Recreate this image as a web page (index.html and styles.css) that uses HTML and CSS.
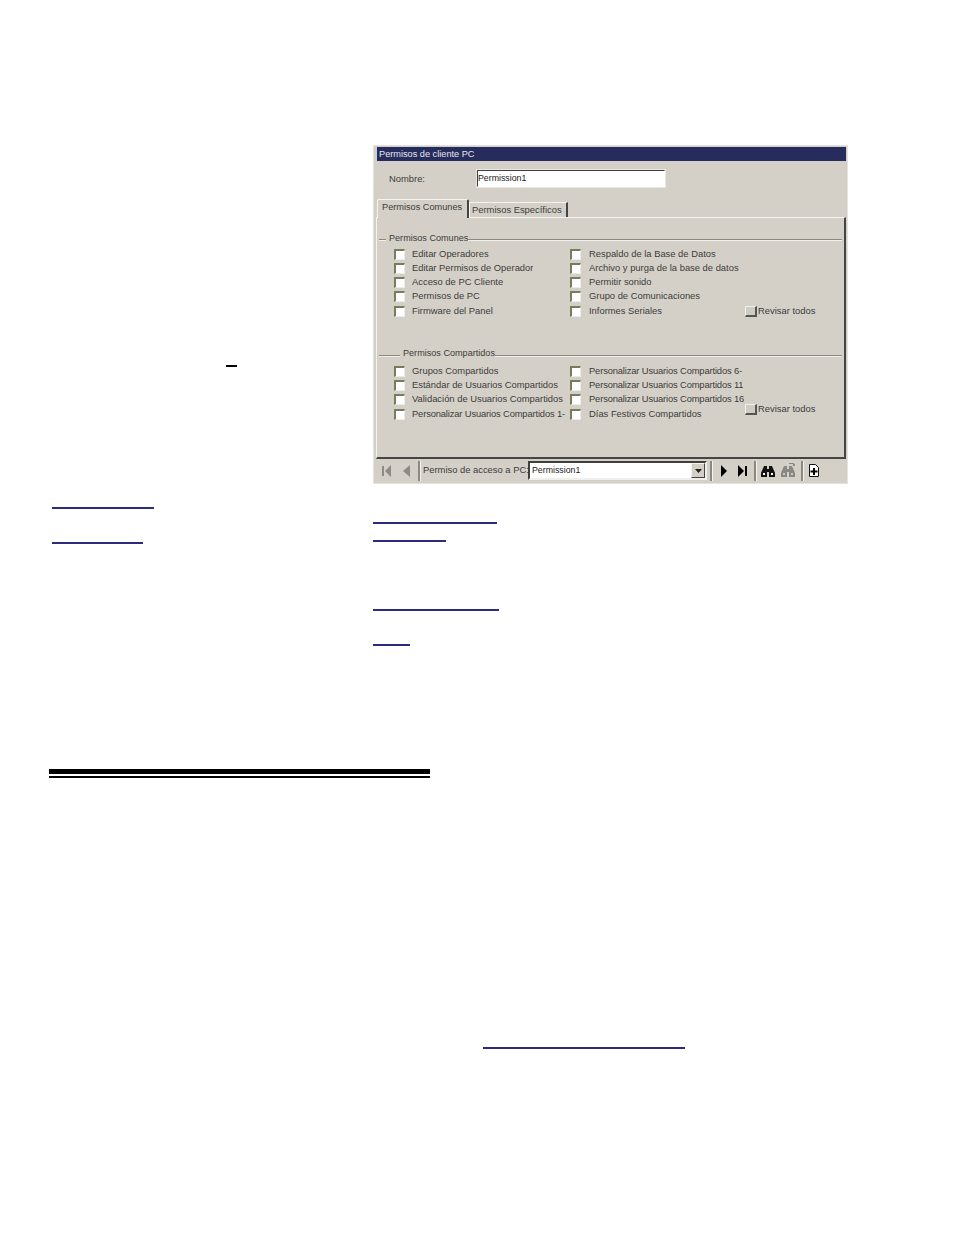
FILE: index.html
```html
<!DOCTYPE html>
<html lang="es">
<head>
<meta charset="utf-8">
<title>Permisos de cliente PC</title>
<link rel="stylesheet" href="styles.css">
</head>
<body>
<main class="page">
  <section class="left">
    <div class="dash"></div>
    <div class="link link-a"></div>
    <div class="link link-b"></div>
    <div class="heavy-rule"></div>
    <div class="thin-rule"></div>
  </section>
  <section class="right">
    <div class="dialog">
      <div class="title">Permisos de cliente PC</div>
      <div class="name-row">
        <span class="name-label">Nombre:</span>
        <div class="name-input">Permission1</div>
      </div>
      <div class="tabs">
        <div class="tab tab-active">Permisos Comunes</div>
        <div class="tab tab-other">Permisos Específicos</div>
      </div>
      <div class="panel">
        <div class="group-head head-one"><span class="line line-short"></span><span class="head-text">Permisos Comunes</span><span class="line"></span></div>
        <div class="checks">
          <div class="item"><i class="box"></i><span>Editar Operadores</span></div>
          <div class="item"><i class="box"></i><span>Respaldo de la Base de Datos</span></div>
          <div class="item"><i class="box"></i><span>Editar Permisos de Operador</span></div>
          <div class="item"><i class="box"></i><span>Archivo y purga de la base de datos</span></div>
          <div class="item"><i class="box"></i><span>Acceso de PC Cliente</span></div>
          <div class="item"><i class="box"></i><span>Permitir sonido</span></div>
          <div class="item"><i class="box"></i><span>Permisos de PC</span></div>
          <div class="item"><i class="box"></i><span>Grupo de Comunicaciones</span></div>
          <div class="item"><i class="box"></i><span>Firmware del Panel</span></div>
          <div class="item"><i class="box"></i><span>Informes Seriales</span></div>
          <div class="review review-one"><i class="raised"></i><span>Revisar todos</span></div>
        </div>
        <div class="group-head head-two"><span class="line line-long"></span><span class="head-text">Permisos Compartidos</span><span class="line"></span></div>
        <div class="checks">
          <div class="item"><i class="box"></i><span>Grupos Compartidos</span></div>
          <div class="item"><i class="box"></i><span class="tight">Personalizar Usuarios Compartidos 6-</span></div>
          <div class="item"><i class="box"></i><span>Estándar de Usuarios Compartidos</span></div>
          <div class="item"><i class="box"></i><span class="tight">Personalizar Usuarios Compartidos 11</span></div>
          <div class="item"><i class="box"></i><span>Validación de Usuarios Compartidos</span></div>
          <div class="item"><i class="box"></i><span class="tight">Personalizar Usuarios Compartidos 16</span></div>
          <div class="item"><i class="box"></i><span class="tight">Personalizar Usuarios Compartidos 1-</span></div>
          <div class="item"><i class="box"></i><span>Días Festivos Compartidos</span></div>
          <div class="review review-two"><i class="raised"></i><span>Revisar todos</span></div>
        </div>
      </div>
      <div class="toolbar">
        <svg class="ic ic-first" viewBox="0 0 9 12"><path fill="#8d8b85" d="M0 1h2v10H0zM9 0v12L3 6z"/></svg>
        <svg class="ic ic-prev" viewBox="0 0 8 12"><path fill="#8d8b85" d="M8 0v12L1 6z"/></svg>
        <span class="sep sep-a"></span>
        <span class="bar-label">Permiso de acceso a PC:</span>
        <div class="combo"><span class="combo-text">Permission1</span><span class="combo-btn"><svg viewBox="0 0 7 4" class="combo-arrow"><path fill="#222" d="M0 0h7L3.500 4z"/></svg></span></div>
        <span class="sep sep-b"></span>
        <svg class="ic ic-next" viewBox="0 0 6 12"><path fill="#000" d="M0 0v12l6-6z"/></svg>
        <svg class="ic ic-last" viewBox="0 0 9 12"><path fill="#000" d="M0 0v12l6-6zM7 1h2v10H7z"/></svg>
        <span class="sep sep-c"></span>
        <svg class="ic ic-bino" viewBox="0 0 14 12"><path fill="#111" d="M3 1h3v3h2V1h3l3 7v4H8V7H6v5H0V8z"/><path fill="#fff" d="M2 8h2v2H2zM10 8h2v2h-2z"/></svg>
        <svg class="ic ic-bino ic-bino-off" viewBox="0 0 15 14"><path fill="#8a8882" d="M3 3h3v3h2V3h3l3 7v4H8V9H6v5H0v-4z"/><path fill="#c9c6bf" d="M2 10h2v2H2zM10 10h2v2h-2z"/><path fill="#8a8882" d="M8 0h5v1H8zM12 1h2v2h-2z"/></svg>
        <span class="sep sep-d"></span>
        <svg class="ic ic-doc" viewBox="0 0 10 13"><path fill="#fff" stroke="#111" d="M.5.500h6l3 3v9H.5z"/><path fill="#000" d="M4 4h2v2.500h2.500v2H6V11H4V8.500H1.500v-2H4z"/></svg>
      </div>
    </div>
    <div class="link link-c"></div>
    <div class="link link-d"></div>
    <div class="link link-e"></div>
    <div class="link link-f"></div>
    <div class="link link-g"></div>
  </section>
</main>
</body>
</html>
```
FILE: styles.css
```css
* { box-sizing: border-box; }
html, body { margin: 0; padding: 0; background: #fff; }
body { width: 954px; height: 1235px; overflow: hidden; font-family: "Liberation Sans", Arial, sans-serif; font-size: 9.400px; color: #3c3c3a; }

.page { display: grid; grid-template-columns: 373px 581px; height: 1235px; }
.left { padding: 365px 0 0 49px; }
.right { padding-top: 145px; }

.dash { width: 11px; height: 2px; margin-left: 177px; background: #000; }
.link { height: 2px; background: #2b2b80; }
.link-a { width: 102px; margin: 140px 0 0 3px; }
.link-b { width: 91px; margin: 33px 0 0 3px; }
.heavy-rule { width: 381px; height: 5px; margin-top: 225px; background: #000; }
.thin-rule { width: 381px; height: 1.500px; margin-top: 2px; background: #000; }
.link-c { width: 124px; margin-top: 38px; }
.link-d { width: 73px; margin-top: 16px; }
.link-e { width: 126px; margin-top: 67px; }
.link-f { width: 37px; margin-top: 33px; }
.link-g { width: 202px; margin: 401px 0 0 110px; }

.dialog { width: 475px; height: 339px; background: #d4d0c8; border: 1px solid #e4e2dc; padding: 1px 2px 0 3px; }
.title { height: 14px; margin-right: -1px; padding-left: 2px; background: #262d5e; color: #e6e6ea; font-size: 9.200px; line-height: 14px; }
.name-row { display: flex; align-items: center; height: 19px; margin-top: 8px; }
.name-label { width: 99px; padding-left: 12px; }
.name-input { width: 190px; height: 19px; padding-left: 0; background: #fff; border: 2px solid; border-color: #3f3f3f #fff #fff #3f3f3f; outline: 1px solid #e9e7e2; outline-offset: -1px; color: #222; font-size: 8.800px; line-height: 15px; }

.tabs { display: flex; align-items: flex-end; height: 18px; margin-top: 11px; }
.tab { background: #d4d0c8; white-space: nowrap; border-top: 1px solid #f4f3f0; border-left: 1px solid #f4f3f0; border-right: 2px solid #444; }
.tab-active { width: 92px; height: 19px; margin-bottom: -1px; padding: 2px 0 0 4px; position: relative; z-index: 1; font-size: 9.200px; border-radius: 2px 2px 0 0; }
.tab-other { width: 99px; height: 15px; padding: 1px 0 0 2px; }

.panel { height: 242px; margin-left: -1px; margin-right: -1px; border: solid; border-width: 1px 2px 2px 1px; border-color: #f4f3f0 #454545 #454545 #f4f3f0; padding: 15px 2px 0 2px; }
.group-head { display: flex; align-items: center; height: 12px; font-size: 9.100px; white-space: nowrap; }
.head-text { padding-bottom: 2px; }
.head-two .head-text { padding-bottom: 4px; }
.line { flex: 1; height: 1px; background: #8a8880; box-shadow: 0 1px 0 #f0efeb; }
.line-short { flex: 0 0 7px; margin-right: 3px; }
.line-long { flex: 0 0 21px; margin-right: 3px; }
.head-two { margin-top: 31px; }
.head-two + .checks { margin-top: 3px; }

.checks { display: grid; grid-template-columns: 176px 175px 96px; grid-auto-rows: 14.250px; margin: 2px 0 0 15px; }
.item { display: flex; align-items: center; min-width: 0; overflow: hidden; white-space: nowrap; }
.item:nth-child(odd) { grid-column: 1; }
.item:nth-child(even) { grid-column: 2; }
.item:nth-child(even) .box { margin-right: 8px; }
.item span { overflow: hidden; padding-bottom: 2px; }
.item .tight { letter-spacing: -.15px; }
.box { flex: none; width: 11px; height: 11px; margin-right: 7px; background: #fff; border: solid; border-width: 2px 1px 1px 2px; border-color: #7a7b5c #ecebe6 #ecebe6 #7a7b5c; }
.review { display: flex; align-items: center; grid-column: 3; white-space: nowrap; }
.review span { padding-bottom: 2px; }
.review-one { grid-row: 5; }
.review-two { grid-row: 4; margin-bottom: 10px; }
.raised { flex: none; width: 12px; height: 11px; margin-right: 1px; background: #cfccc4; border: solid; border-width: 1px 2px 2px 1px; border-color: #f0efeb #555 #555 #f0efeb; }

.toolbar { display: flex; align-items: center; height: 24px; margin: 0 -1px; padding-bottom: 1px; }
.ic { flex: none; display: block; }
.ic-first { width: 9px; height: 12px; margin-left: 6px; }
.ic-prev { width: 8px; height: 12px; margin-left: 11px; }
.sep { flex: none; width: 2px; height: 20px; background: #8a8880; box-shadow: 1px 0 0 #f4f3f0; }
.sep-a { margin: 0 3px 0 8px; }
.bar-label { flex: none; width: 105px; white-space: nowrap; padding-bottom: 2px; }
.combo { flex: none; display: flex; width: 179px; height: 19px; background: #fff; border: 2px solid; border-color: #3f3f3f #f0efeb #f0efeb #3f3f3f; }
.combo-text { flex: 1; padding-left: 2px; color: #222; font-size: 8.800px; line-height: 15px; }
.combo-btn { display: flex; align-items: center; justify-content: center; width: 14px; background: #d4d0c8; border: 1px solid; border-color: #f4f3f0 #444 #444 #f4f3f0; }
.combo-arrow { width: 7px; height: 4px; }
.sep-b { margin-left: 3px; }
.ic-next { width: 6px; height: 12px; margin-left: 9px; }
.ic-last { width: 9px; height: 12px; margin-left: 11px; }
.sep-c { margin-left: 7px; }
.ic-bino { width: 14px; height: 12px; margin-left: 5px; }
.ic-bino-off { width: 15px; height: 14px; margin-left: 6px; margin-top: -2px; }
.sep-d { margin-left: 5px; }
.ic-doc { width: 10px; height: 13px; margin-left: 6px; }
```
